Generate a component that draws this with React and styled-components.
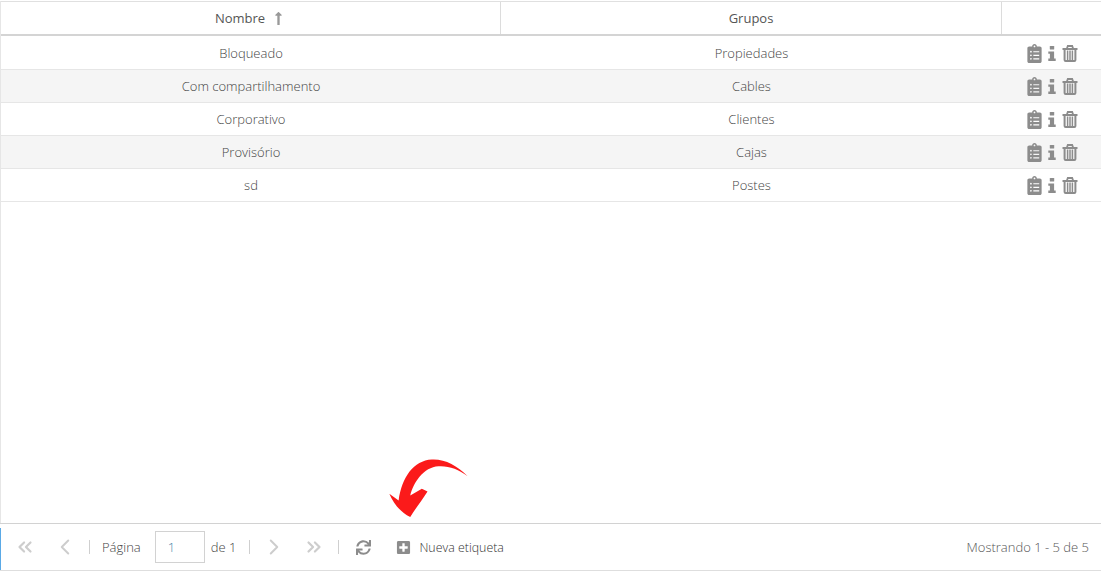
import React from "react";
import styled, { createGlobalStyle } from "styled-components";
import { FaClipboardList, FaSync, FaPlusSquare, FaLongArrowAltUp } from "react-icons/fa";
import { FiChevronLeft, FiChevronRight, FiChevronsLeft, FiChevronsRight } from "react-icons/fi";

const GlobalStyle = createGlobalStyle`
  html, body { margin: 0; padding: 0; background: #fff; }
  * { box-sizing: border-box; }
`;

const Page = styled.div`
  position: relative;
  width: 1101px;
  height: 574px;
  padding-top: 1px;
  display: flex;
  flex-direction: column;
  font-family: "Open Sans", sans-serif;
  font-size: 13px;
  font-weight: 300;
  color: #444;
  overflow: hidden;
`;

const Grid = styled.div`
  flex: 1;
  border-left: 1px solid #e6e6e6;
  display: flex;
  flex-direction: column;
`;

const HeaderRow = styled.div`
  display: grid;
  grid-template-columns: 500px 501px 1fr;
  height: 35px;
  margin-bottom: 1px;
  border-top: 1px solid #e0e0e0;
  border-bottom: 2px solid #d4d4d4;
`;

const HeaderCell = styled.div`
  display: flex;
  align-items: center;
  justify-content: center;
  gap: 6px;
  font-weight: 400;
  color: #555;
  border-right: ${(p) => (p.$last ? "none" : "1px solid #dcdcdc")};
`;

const Row = styled.div`
  display: grid;
  grid-template-columns: 500px 501px 1fr;
  height: 33px;
  background: ${(p) => (p.$odd ? "#f5f5f5" : "#fff")};
  border-bottom: 1px solid #e6e6e6;
`;

const Cell = styled.div`
  display: flex;
  align-items: center;
  justify-content: center;
`;

const Actions = styled.div`
  display: flex;
  align-items: center;
  justify-content: flex-end;
  gap: 6px;
  padding-right: 23px;
  color: #8c8c8c;
`;

const ClipboardIcon = styled(FaClipboardList)`
  width: 15px;
  height: 19px;
`;

const Footer = styled.div`
  height: 48px;
  margin-bottom: 3px;
  border-top: 1px solid #d2d2d2;
  border-bottom: 1px solid #dedede;
  display: flex;
  align-items: center;
  position: relative;
  padding: 0 12px 0 0;
`;

const BlueEdge = styled.span`
  position: absolute;
  left: 0;
  top: 4px;
  bottom: 0;
  width: 1px;
  background: #5aa9e6;
`;

const PagerIcon = styled.span`
  display: flex;
  justify-content: center;
  width: ${(p) => p.$w}px;
  color: #cdcdcd;
`;

const Sep = styled.span`
  width: 1px;
  height: 14px;
  background: #cfcfcf;
`;

const PagerText = styled.span`
  margin: 0 ${(p) => p.$right || 0}px 0 ${(p) => p.$left || 0}px;
`;

const PageInput = styled.div`
  width: 50px;
  height: 32px;
  border: 1px solid #d2d2d2;
  padding-left: 12px;
  display: flex;
  align-items: center;
  color: #4a7fa8;
`;

const ToolButton = styled.span`
  display: flex;
  align-items: center;
  color: #8c8c8c;
  font-size: 15px;
  margin-left: ${(p) => p.$left}px;
`;

const ButtonLabel = styled.span`
  margin-left: 8px;
  font-size: 12.4px;
  font-weight: 300;
  color: #333;
`;

const Summary = styled.span`
  margin-left: auto;
  color: #555;
`;

const CurvedArrow = styled.svg`
  position: absolute;
  left: 387px;
  top: 457px;
  width: 83px;
  height: 62px;
`;

const InfoIcon = () => (
  <svg width="8" height="15" viewBox="0 0 8 15" fill="currentColor">
    <rect x="1.8" y="0" width="4.4" height="3.6" rx="0.6" />
    <path d="M0.3 5.4 H6.1 V12.6 H7.7 V15 H0.3 V12.6 H1.9 V7.8 H0.3 Z" />
  </svg>
);

const TrashIcon = () => (
  <svg width="16" height="17" viewBox="0 0 16 17" fill="none" stroke="currentColor">
    <path strokeWidth="1.8" d="M5 3.2 L5.8 1 H10.2 L11 3.2" />
    <path strokeWidth="2" d="M0.5 4 H15.5" />
    <path strokeWidth="2" d="M2.6 4 V15 Q2.6 16 3.6 16 H12.4 Q13.4 16 13.4 15 V4" />
    <path strokeWidth="1.5" d="M5.6 5.5 V15 M8 5.5 V15 M10.4 5.5 V15" />
  </svg>
);

const rows = [
  ["Bloqueado", "Propiedades"],
  ["Com compartilhamento", "Cables"],
  ["Corporativo", "Clientes"],
  ["Provisório", "Cajas"],
  ["sd", "Postes"],
];

export default function App() {
  return (
    <Page>
      <GlobalStyle />
      <Grid>
        <HeaderRow>
          <HeaderCell>
            Nombre <FaLongArrowAltUp color="#999" size={15} />
          </HeaderCell>
          <HeaderCell>Grupos</HeaderCell>
          <HeaderCell $last />
        </HeaderRow>
        {rows.map(([name, group], i) => (
          <Row key={name} $odd={i % 2 === 1}>
            <Cell>{name}</Cell>
            <Cell>{group}</Cell>
            <Actions>
              <ClipboardIcon />
              <InfoIcon />
              <TrashIcon />
            </Actions>
          </Row>
        ))}
      </Grid>
      <Footer>
        <BlueEdge />
        <PagerIcon $w={50}><FiChevronsLeft size={22} strokeWidth={2.4} /></PagerIcon>
        <PagerIcon $w={30}><FiChevronLeft size={26} strokeWidth={1.8} /></PagerIcon>
        <PagerIcon $w={9} />
        <Sep />
        <PagerText $left={12} $right={14}>Página</PagerText>
        <PageInput>1</PageInput>
        <PagerText $left={6} $right={13}>de 1</PagerText>
        <Sep />
        <PagerIcon $w={48}><FiChevronRight size={26} strokeWidth={1.8} /></PagerIcon>
        <PagerIcon $w={32}><FiChevronsRight size={22} strokeWidth={2.4} /></PagerIcon>
        <PagerIcon $w={8} />
        <Sep />
        <ToolButton $left={17}><FaSync /></ToolButton>
        <ToolButton $left={25}>
          <FaPlusSquare />
          <ButtonLabel>Nueva etiqueta</ButtonLabel>
        </ToolButton>
        <Summary>Mostrando 1 - 5 de 5</Summary>
      </Footer>
      <CurvedArrow viewBox="440 20 250 185">
        <path
          fill="#fb1a1a"
          d="M683 77 C650 45 615 25 575 27 C520 30 485 80 475 150 L447 130 C460 160 480 185 510 200 C525 175 545 150 562 123 L545 115 L510 135 C520 95 550 50 595 47 C625 45 655 55 683 77 Z"
        />
      </CurvedArrow>
    </Page>
  );
}
